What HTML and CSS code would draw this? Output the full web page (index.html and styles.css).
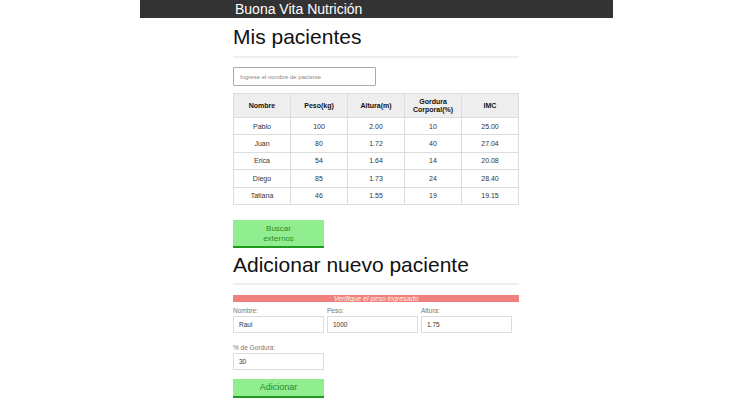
FILE: index.html
```html
<!DOCTYPE html>
<html lang="es">
<head>
<meta charset="utf-8">
<title>Buona Vita Nutrición</title>
<link rel="stylesheet" href="styles.css">
</head>
<body>
<header class="topbar">
  <div class="container">
    <h1 class="brand">Buona Vita Nutrición</h1>
  </div>
</header>
<main class="container">
  <section>
    <h2 class="title">Mis pacientes</h2>
    <hr class="rule">
    <input class="filter" type="text" placeholder="Ingrese el nombre de paciente">
    <table class="patients">
      <thead>
        <tr>
          <th>Nombre</th>
          <th>Peso(kg)</th>
          <th>Altura(m)</th>
          <th>Gordura<br>Corporal(%)</th>
          <th>IMC</th>
        </tr>
      </thead>
      <tbody>
        <tr><td>Pablo</td><td>100</td><td>2.00</td><td>10</td><td>25.00</td></tr>
        <tr><td>Juan</td><td>80</td><td>1.72</td><td>40</td><td>27.04</td></tr>
        <tr><td>Erica</td><td>54</td><td>1.64</td><td>14</td><td>20.08</td></tr>
        <tr><td>Diego</td><td>85</td><td>1.73</td><td>24</td><td>28.40</td></tr>
        <tr><td>Tatiana</td><td>46</td><td>1.55</td><td>19</td><td>19.15</td></tr>
      </tbody>
    </table>
    <button class="btn btn-search">Buscar<br>externos</button>
  </section>
  <section>
    <h2 class="title title-add">Adicionar nuevo paciente</h2>
    <hr class="rule rule-add">
    <div class="error">Verifique el peso ingresado</div>
    <form class="form">
      <div class="row">
        <div class="field">
          <label class="lbl">Nombre:</label>
          <input class="inp" type="text" value="Raul">
        </div>
        <div class="field">
          <label class="lbl">Peso:</label>
          <input class="inp" type="text" value="1000">
        </div>
        <div class="field">
          <label class="lbl">Altura:</label>
          <input class="inp" type="text" value="1.75">
        </div>
      </div>
      <div class="row row-fat">
        <div class="field">
          <label class="lbl">% de Gordura:</label>
          <input class="inp" type="text" value="30">
        </div>
      </div>
      <button class="btn btn-add" type="button">Adicionar</button>
    </form>
  </section>
</main>
</body>
</html>
```
FILE: styles.css
```css
* { box-sizing: border-box; }
html, body {
  margin: 0;
  padding: 0;
  background: #fff;
  font-family: "Liberation Sans", Arial, sans-serif;
  color: #333;
}
.topbar {
  width: 473px;
  height: 18px;
  margin: 0 auto;
  background: #333;
}
.container {
  width: 286px;
  margin: 0 auto;
}
.brand {
  margin: 0;
  padding-left: 2px;
  font-size: 14px;
  font-weight: normal;
  line-height: 18px;
  color: #fff;
}
.title {
  margin: 7px 0 0;
  font-size: 21px;
  font-weight: normal;
  line-height: 24px;
  color: #111;
}
.rule {
  margin: 7px 0 0;
  border: 0;
  border-top: 2px solid #eee;
  height: 0;
}
.filter {
  display: block;
  margin-top: 9px;
  width: 143px;
  height: 19px;
  border: 1px solid #aaa;
  border-radius: 1px;
  padding: 0 6px;
  font-family: inherit;
  font-size: 6px;
  color: #333;
}
.filter::placeholder { color: #888; }
.patients {
  margin-top: 7px;
  width: 286px;
  border-collapse: collapse;
  table-layout: fixed;
  font-size: 7px;
}
.patients th, .patients td {
  border: 1px solid #ddd;
  text-align: center;
  padding: 0;
}
.patients th {
  background: #eee;
  height: 24px;
  font-weight: bold;
  color: #111;
  line-height: 8px;
}
.patients td {
  height: 17.4px;
  color: #333;
}
.btn {
  display: block;
  width: 91px;
  border: 0;
  border-bottom: 2px solid #1f9a1f;
  background: #90ee90;
  color: #2b8a2b;
  font-family: inherit;
  padding: 0;
  text-align: center;
  cursor: pointer;
}
.btn-search {
  margin-top: 15px;
  height: 28px;
  font-size: 8px;
  line-height: 10px;
  padding-top: 2px;
}
.title-add { margin-top: 5px; }
.rule-add { margin-top: 6px; }
.error {
  margin-top: 10px;
  height: 7px;
  background: #f08080;
  color: #fff3e0;
  font-size: 7px;
  font-style: italic;
  line-height: 7px;
  text-align: center;
}
.form { margin: 0; }
.row {
  display: flex;
  gap: 3px;
  margin-top: 5px;
}
.row-fat { margin-top: 11px; }
.field {
  display: flex;
  flex-direction: column;
  width: 91px;
}
.lbl {
  font-size: 6.5px;
  line-height: 8px;
  color: #777;
  height: 9px;
}
.inp {
  width: 91px;
  height: 17px;
  border: 1px solid #ddd;
  padding: 0 5px;
  font-family: inherit;
  font-size: 6.5px;
  color: #333;
  background: #fff;
}
.btn-add {
  margin-top: 9px;
  height: 19px;
  font-size: 9px;
  line-height: 17px;
}
```
